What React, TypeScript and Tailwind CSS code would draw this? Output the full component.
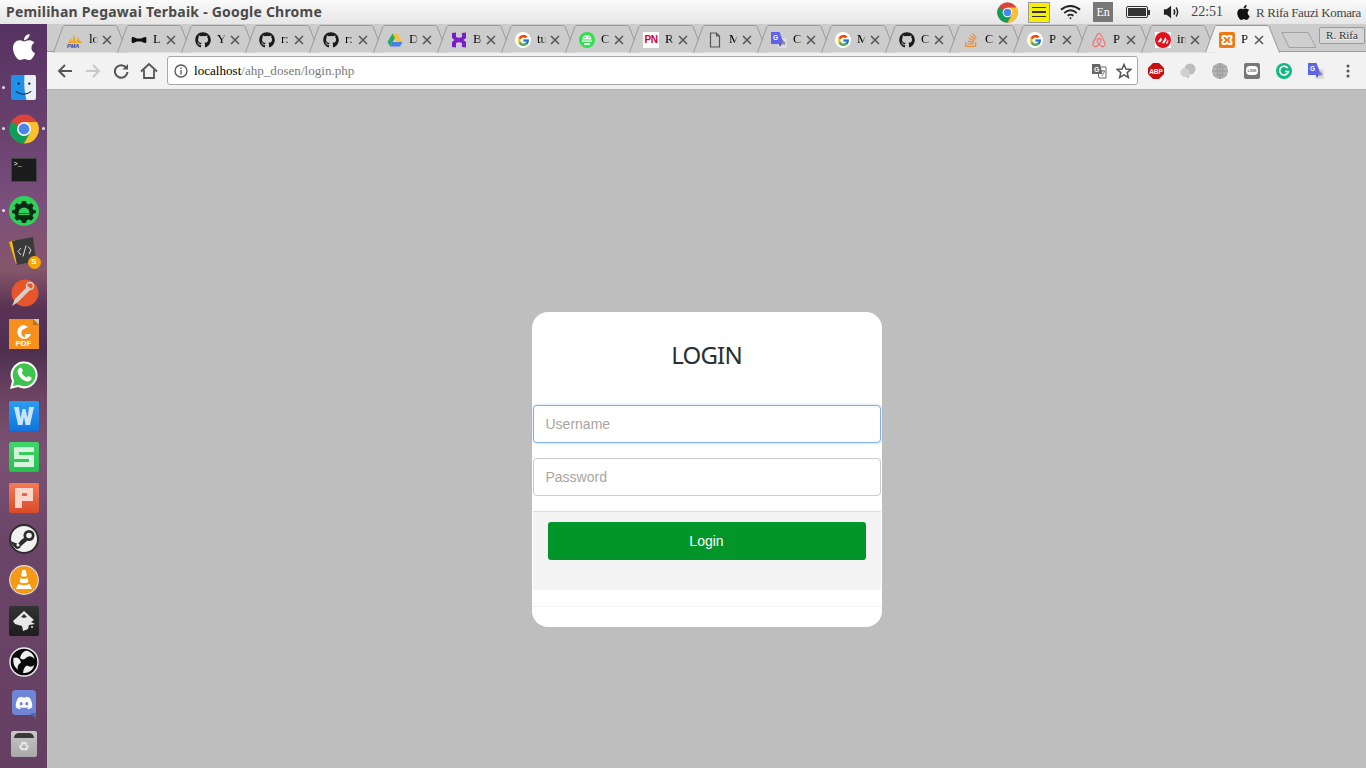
import React from "react";
import { FaGithub, FaStackOverflow, FaAirbnb, FaDiscord, FaApple } from "react-icons/fa";
import { FcGoogle } from "react-icons/fc";

const GoogleIcon = () => (
  <span className="flex h-4 w-4 items-center justify-center rounded-full bg-white">
    <FcGoogle size={13} />
  </span>
);
const Gh = () => <FaGithub size={16} color="#1b1b1b" />;

const Pma = () => (
  <svg viewBox="0 0 16 16" className="h-4 w-4">
    <path d="M1 11 L4 6 L5 11Z M5 11 L7 2 L9 11Z M9 11 L11 5 L13 11Z M12 8 L15.5 11 L13 11Z" fill="#f2a31b" />
    <text x="0" y="15.5" fontSize="5.5" fontWeight="700" fontStyle="italic" fill="#3b3b9a" fontFamily="Liberation Sans">PMA</text>
  </svg>
);
const Bow = () => (
  <svg viewBox="0 0 16 16" className="h-4 w-4">
    <path d="M1 5 C3 4.5 5 6.5 6 6.5 H10 C11 6.5 13 4.5 15 5 C15.6 7 15.6 9 15 11 C13 11.5 11 9.5 10 9.5 H6 C5 9.5 3 11.5 1 11 C0.4 9 0.4 7 1 5Z" fill="#111" />
  </svg>
);
const Drive = () => (
  <svg viewBox="0 0 16 16" className="h-4 w-4">
    <path d="M5.5 1.5 H10.5 L15.5 10 H10.5Z" fill="#fbc02d" />
    <path d="M5.5 1.5 L8 6 L3 14.5 L0.5 10Z" fill="#2aa866" />
    <path d="M3 14.5 L5.5 10 H15.5 L13 14.5Z" fill="#4a7fe8" />
  </svg>
);
const Hacker = () => (
  <svg viewBox="0 0 16 16" className="h-4 w-4">
    <path d="M1 1 L5 0.5 V5 Q8 6.5 11 5 V1 L15 0.5 V6 L12.5 8 L15 10 V15.5 L11 15 V11 Q8 9.5 5 11 V15.5 L1 15 V10 L3.5 8 L1 6Z" fill="#7a1fc8" />
  </svg>
);
const AndroidGreen = () => (
  <svg viewBox="0 0 16 16" className="h-4 w-4">
    <circle cx="8" cy="8" r="8" fill="#2fe04f" />
    <path d="M3.5 7.5 A4.5 4.5 0 0 1 12.5 7.5Z M3 8.5 H13 V10 H3Z M5 11 H11 V13 H5Z" fill="#fff" />
    <circle cx="6" cy="5.5" r="0.8" fill="#2fe04f" />
    <circle cx="10" cy="5.5" r="0.8" fill="#2fe04f" />
  </svg>
);
const Pn = () => (
  <span className="flex h-4 w-4 items-center justify-center bg-white font-['Liberation_Sans'] text-[10px] font-bold leading-none tracking-tighter text-[#d0021b]">PN</span>
);
const Doc = () => (
  <svg viewBox="0 0 16 16" className="h-4 w-4" fill="none" stroke="#555" strokeWidth="1.2">
    <path d="M3.5 1 H9.5 L12.5 4 V15 H3.5Z M9.5 1 V4 H12.5" />
  </svg>
);
const GTranslate = () => (
  <svg viewBox="0 0 16 16" className="h-4 w-4">
    <path d="M9 6 H16 V16 H7Z" fill="#dcdcdc" />
    <path d="M0 0 H8.5 L13 12 H0Z" fill="#5f63e8" />
    <path d="M8 12 H10.5 L9 15Z" fill="#4a3fb0" />
    <path d="M12.5 8 L13.3 10 L15 10.2 L13.7 11.4 L14 13.2 L12.5 12.3 L11 13.2 L11.3 11.4 L10 10.2 L11.7 10Z" fill="#8a8aa0" />
    <text x="2" y="8" fontSize="6.5" fontWeight="700" fill="#fff" fontFamily="Liberation Sans">G</text>
  </svg>
);
const So = () => <FaStackOverflow size={16} color="#e8913a" />;
const Air = () => <FaAirbnb size={16} color="#ff5a5f" />;
const Dots = () => (
  <span className="flex h-4 w-4 items-center justify-center bg-white">
    <svg viewBox="0 0 16 16" className="h-4 w-4">
      <circle cx="8" cy="8" r="8" fill="#e1101a" />
      <path d="M2.5 10 L6 5.5 L7 8 L5 10.5Z M7 11 L10.5 5 L11.5 8 L9 11.5Z M11 11 L13 7.5 L13.5 9.5 L12 12Z" fill="#fff" />
    </svg>
  </span>
);
const Xampp = () => (
  <svg viewBox="0 0 16 16" className="h-4 w-4">
    <rect width="16" height="16" rx="2" fill="#ee7a10" />
    <path d="M4 3 H7 L8 4.5 L9 3 H12 Q13.5 3 13.5 5 V6.5 L12 8 L13.5 9.5 V11 Q13.5 13 12 13 H9 L8 11.5 L7 13 H4 Q2.5 13 2.5 11 V9.5 L4 8 L2.5 6.5 V5 Q2.5 3 4 3Z M4.5 5 V6 L6.5 8 L4.5 10 V11 H6.2 L8 9 L9.8 11 H11.5 V10 L9.5 8 L11.5 6 V5 H9.8 L8 7 L6.2 5Z" fill="#fff" fillRule="evenodd" />
  </svg>
);

const tabs: { icon: React.ReactNode; t: string }[] = [
  { icon: <Pma />, t: "lo" },
  { icon: <Bow />, t: "L" },
  { icon: <Gh />, t: "Y" },
  { icon: <Gh />, t: "r:" },
  { icon: <Gh />, t: "r:" },
  { icon: <Drive />, t: "D" },
  { icon: <Hacker />, t: "B" },
  { icon: <GoogleIcon />, t: "tu" },
  { icon: <AndroidGreen />, t: "C" },
  { icon: <Pn />, t: "R" },
  { icon: <Doc />, t: "M" },
  { icon: <GTranslate />, t: "C" },
  { icon: <GoogleIcon />, t: "M" },
  { icon: <Gh />, t: "C" },
  { icon: <So />, t: "C" },
  { icon: <GoogleIcon />, t: "P" },
  { icon: <Air />, t: "P" },
  { icon: <Dots />, t: "in" },
  { icon: <Xampp />, t: "P" },
];

const Close = () => (
  <svg viewBox="0 0 10 10" className="absolute left-[49px] top-[10px] h-[10px] w-[10px]" stroke="#555" strokeWidth="1.5">
    <path d="M1 1 L9 9 M9 1 L1 9" />
  </svg>
);

const Tab = ({ icon, t, active }: { icon: React.ReactNode; t: string; active?: boolean }) => (
  <div className={`relative h-[27px] w-[64px] shrink-0 ${active ? "z-10" : ""}`}>
    <svg viewBox="0 0 76 28" className="absolute left-0 top-0 h-[28px] w-[76px]">
      <path d="M0.5 27.5 L10 1.5 Q10.5 0.5 12 0.5 H62 Q63.5 0.5 64 1.5 L74.5 27.5" fill={active ? "#f2f2f2" : "#cccccc"} stroke="#9a9a9a" strokeWidth="1" />
    </svg>
    <div className="absolute left-[14px] top-[7px] flex h-4 w-4 items-center justify-center">{icon}</div>
    <div className="absolute left-[36px] top-[4px] w-[9px] overflow-hidden whitespace-nowrap font-['Liberation_Serif'] text-[13px] leading-[20px] text-black [mask-image:linear-gradient(90deg,#000_55%,transparent)]">{t}</div>
    <Close />
  </div>
);

const ChromeLogo = ({ size }: { size: number }) => (
  <svg viewBox="0 0 32 32" style={{ width: size, height: size }}>
    <circle cx="16" cy="16" r="15.5" fill="#db4437" />
    <path d="M16 16 L2.6 8.2 A15.5 15.5 0 0 0 16 31.5 L23.7 18.2Z" fill="#0f9d58" />
    <path d="M16 8.5 H29.9 A15.5 15.5 0 0 1 16 31.5 L23 19Z" fill="#fbc02d" />
    <circle cx="16" cy="16" r="7.4" fill="#fff" />
    <circle cx="16" cy="16" r="5.8" fill="#4a86e8" />
  </svg>
);

const Finder = () => (
  <svg viewBox="0 0 26 26" className="h-[25px] w-[25px]">
    <rect width="26" height="26" rx="2" fill="#1f8fe8" />
    <path d="M14 0 H24 Q26 0 26 2 V24 Q26 26 24 26 H16 Q13 14 14 0Z" fill="#e8eef4" />
    <circle cx="8" cy="9" r="1.2" fill="#123" />
    <circle cx="19" cy="9" r="1.2" fill="#123" />
    <path d="M5 17 Q13 23 21 17" fill="none" stroke="#123" strokeWidth="1.2" />
  </svg>
);
const Terminal = () => (
  <div className="flex h-[24px] w-[26px] items-start rounded-[1px] border border-[#444] bg-[#1c1c1c] pl-[2px] pt-[1px] font-['Liberation_Mono'] text-[7px] leading-[8px] text-white">&gt;_</div>
);
const AndroidGear = () => (
  <svg viewBox="0 0 30 30" className="h-[30px] w-[30px]">
    <circle cx="15" cy="15" r="15" fill="#2fd158" />
    <path d="M13 5 H17 L17.6 7.4 L20 8.4 L22 7 L24.8 9.8 L23.4 11.8 L24.4 14 L27 14.6 V17 L24.4 17.8 L23.4 20 L24.8 22 L22 24.8 L20 23.4 L17.6 24.4 L17 27 H13 L12.4 24.4 L10 23.4 L8 24.8 L5.2 22 L6.6 20 L5.6 17.8 L3 17 V14.6 L5.6 14 L6.6 11.8 L5.2 9.8 L8 7 L10 8.4 L12.4 7.4Z" fill="#0d2a14" />
    <path d="M9.5 17 A5.5 5.5 0 0 1 20.5 17Z" fill="#2fd158" />
    <rect x="9.5" y="17.6" width="11" height="1.4" fill="#2fd158" />
  </svg>
);
const Sublime = () => (
  <div className="relative h-[30px] w-[30px]">
    <svg viewBox="0 0 30 30" className="h-[30px] w-[30px]">
      <path d="M0 5 L6 3 L11 26 L7 27Z" fill="#f5b915" />
      <path d="M3 4 L24 0 L27 24 L8 28Z" fill="#3a3a3a" />
      <path d="M12 11 L9 14.5 L12 18 M19 9.5 L22 13 L20 17 M17 8.5 L14 19.5" fill="none" stroke="#ddd" strokeWidth="1" />
    </svg>
    <span className="absolute bottom-[-2px] right-[-2px] flex h-[13px] w-[13px] items-center justify-center rounded-full bg-[#f5a50a] font-['Liberation_Sans'] text-[8px] font-bold leading-none text-white">S</span>
  </div>
);
const PenApp = () => (
  <svg viewBox="0 0 30 30" className="h-[30px] w-[30px]">
    <circle cx="16" cy="15" r="13.5" fill="#e5562a" />
    <path d="M3 28 L6 21 L19 8 L22 11 L9 24Z" fill="#d6d0cc" />
    <circle cx="21" cy="8" r="3.5" fill="none" stroke="#d6d0cc" strokeWidth="1.6" />
  </svg>
);
const Foxit = () => (
  <div className="relative flex h-[30px] w-[30px] flex-col items-center justify-end overflow-hidden bg-[#f5901e]">
    <svg viewBox="0 0 30 30" className="absolute left-0 top-0 h-[30px] w-[30px]">
      <path d="M24 0 H30 V6Z" fill="#c8c8c8" />
      <path d="M24 0 L30 6 H24Z" fill="#c0701a" />
      <path d="M15 6 A7 7 0 1 0 22 15 H16 V18 H18 A4 4 0 1 1 15 10 L19 8Z" fill="#fff" />
    </svg>
    <span className="relative font-['Liberation_Sans'] text-[8px] font-bold leading-[11px] text-white">PDF</span>
  </div>
);
const WhatsApp = () => (
  <svg viewBox="0 0 30 30" className="h-[30px] w-[30px]">
    <path d="M1 29 L3 21 A13.5 13.5 0 1 1 9 27Z" fill="#fff" />
    <path d="M4 26 L5.2 20.6 A11.5 11.5 0 1 1 9.4 24.8Z" fill="#3fc34f" />
    <path d="M10.5 8 L12.6 7.6 L14 11 L12.6 12.8 Q14.4 16 17.6 17.6 L19.4 16 L22.6 17.6 L22.2 19.8 Q20 22.4 16 20.8 Q10.6 18.4 8.8 13 Q8 10 10.5 8Z" fill="#fff" />
  </svg>
);
const Wps = ({ cls, children }: { cls: string; children: React.ReactNode }) => (
  <div className={`h-[30px] w-[30px] rounded-[2px] bg-gradient-to-b ${cls}`}>
    <svg viewBox="0 0 30 30" className="h-[30px] w-[30px]">{children}</svg>
  </div>
);
const Steam = () => (
  <svg viewBox="0 0 30 30" className="h-[30px] w-[30px]">
    <circle cx="15" cy="15" r="14" fill="#f1f1f1" stroke="#2d2d2d" strokeWidth="2" />
    <path d="M1.5 17 L9 20 L12 16 L18 12 L18 17 L12 22 Q11 25 8 25 Q4 23 1.5 17Z" fill="#2d2d2d" />
    <circle cx="20" cy="11.5" r="5.5" fill="#2d2d2d" />
    <circle cx="20" cy="11.5" r="2.8" fill="#f1f1f1" />
    <circle cx="9" cy="21" r="1.6" fill="#f1f1f1" />
  </svg>
);
const Vlc = () => (
  <svg viewBox="0 0 30 30" className="h-[30px] w-[30px]">
    <circle cx="15" cy="15" r="14.3" fill="#f59a12" stroke="#dcdcdc" strokeWidth="1.2" />
    <path d="M15 5 L16.6 5 L18 11 Q15 12.5 12 11 L13.4 5Z M11.5 13 Q15 15 18.5 13 L19.5 17 Q15 19.5 10.5 17Z" fill="#fff" />
    <path d="M9.5 19 Q15 21.5 20.5 19 L23 24 H7Z" fill="#fff" />
  </svg>
);
const Inkscape = () => (
  <div className="flex h-[30px] w-[30px] items-center justify-center rounded-[2px] bg-gradient-to-b from-[#333] to-[#1e1e1e]">
    <svg viewBox="0 0 30 30" className="h-[30px] w-[30px]">
      <path d="M15 5 L25 14 L22 16 L26 18 L20 19 L19 23 L14 25 L13 20 L6 18 L4 15Z" fill="#e8e8e8" />
      <path d="M15 8 L18 11 L15 12 L12 11Z" fill="#333" />
      <circle cx="23" cy="21" r="1" fill="#e8e8e8" />
    </svg>
  </div>
);
const Obs = () => (
  <svg viewBox="0 0 30 30" className="h-[30px] w-[30px]">
    <circle cx="15" cy="15" r="14" fill="#0a0a0a" stroke="#f0f0f0" strokeWidth="1.4" />
    <path d="M17 3.5 Q24 4.5 25.5 12 Q22 7.5 17.5 10.5 Q14 14 11 11 Q12 5.5 17 3.5Z" fill="#f0f0f0" />
    <path d="M4.5 11 Q3 18 9 23 Q7.5 18 12 15.5 Q11 11 7 10.5Z" fill="#f0f0f0" />
    <path d="M14 26 Q22 27 25.5 18 Q22 21 18 18.5 Q14.5 20 14 26Z" fill="#f0f0f0" />
  </svg>
);
const DiscordIcon = () => (
  <div className="relative flex h-[25px] w-[24px] items-center justify-center rounded-[4px] bg-[#6f86d6]">
    <FaDiscord size={18} color="#fff" />
    <svg viewBox="0 0 6 6" className="absolute bottom-[-4px] right-0 h-[6px] w-[6px]"><path d="M0 0 H6 V6Z" fill="#4f66b8" /></svg>
  </div>
);
const Trash = () => (
  <div className="flex h-[26px] w-[26px] flex-col items-center rounded-[2px] bg-gradient-to-b from-[#c8c8c8] to-[#a8a8a8] pt-[2px]">
    <span className="h-[5px] w-[20px] rounded-t-[6px] bg-[#3a3a3a]" />
    <span className="mt-[1px] font-['DejaVu_Sans'] text-[13px] leading-[15px] text-[#eeeeee]">♻</span>
  </div>
);

const dock: { icon: React.ReactNode; l?: boolean; r?: boolean }[] = [
  { icon: <FaApple size={30} color="#fff" /> },
  { icon: <Finder />, l: true },
  { icon: <ChromeLogo size={30} />, l: true, r: true },
  { icon: <Terminal /> },
  { icon: <AndroidGear />, l: true },
  { icon: <Sublime /> },
  { icon: <PenApp /> },
  { icon: <Foxit /> },
  { icon: <WhatsApp /> },
  { icon: <Wps cls="from-[#2b9df0] to-[#1273e0]"><path d="M5 6 H10 L11.5 17 L13.5 8 H16.5 L18.5 17 L20 6 H25 L21 24 H16.5 L15 16 L13.5 24 H9Z" fill="#c9e4fb" /></Wps> },
  { icon: <Wps cls="from-[#3fd668] to-[#25c04e]"><path d="M5 5 H25 V10 H10 V13 H25 V25 H5 V20 H20 V17 H5Z" fill="#d4f4dc" /></Wps> },
  { icon: <Wps cls="from-[#f47a55] to-[#d94a26]"><path d="M6 5 H24 V18 H13 V25 H6Z M13 10 V13 H18 V10Z" fill="#fbd7cb" fillRule="evenodd" /></Wps> },
  { icon: <Steam /> },
  { icon: <Vlc /> },
  { icon: <Inkscape /> },
  { icon: <Obs /> },
  { icon: <DiscordIcon /> },
  { icon: <Trash /> },
];

export default function App() {
  return (
    <div className="flex h-[768px] w-[1366px] flex-col overflow-hidden bg-[#bebebe] font-['Liberation_Sans',sans-serif]">
      {/* system bar */}
      <div className="flex h-[24px] shrink-0 items-center justify-between bg-gradient-to-b from-[#fafafa] to-[#e6e6e6] pl-[6px] pr-[5px]">
        <span className="font-['Noto_Sans',sans-serif] text-[14px] font-bold leading-none tracking-[0.22px] text-[#4a4a4a]">Pemilihan Pegawai Terbaik - Google Chrome</span>
        <div className="flex items-center">
          <ChromeLogo size={21} />
          <div className="ml-[10px] flex h-[21px] w-[22px] flex-col items-center justify-center gap-[3px] border border-[#999] bg-[#f5f000]">
            <span className="h-[1.5px] w-[14px] bg-[#333]" />
            <span className="h-[1.5px] w-[14px] bg-[#333]" />
            <span className="h-[1.5px] w-[14px] bg-[#333]" />
          </div>
          <svg viewBox="0 0 22 16" className="ml-[10px] h-[16px] w-[21px]" fill="none" stroke="#222" strokeWidth="2">
            <path d="M1 5.5 Q11 -2 21 5.5 M4.5 9 Q11 3.5 17.5 9 M8 12 Q11 9.5 14 12" />
            <circle cx="11" cy="14.5" r="1" fill="#222" stroke="none" />
          </svg>
          <span className="ml-[12px] flex h-[20px] w-[20px] items-center justify-center bg-[#777] font-['Liberation_Serif'] text-[12px] text-white">En</span>
          <div className="ml-[13px] flex items-center">
            <div className="h-[12px] w-[22px] rounded-[2px] border border-[#333] p-[1px]"><div className="h-full w-full bg-[#333]" /></div>
            <span className="h-[5px] w-[2px] bg-[#333]" />
          </div>
          <svg viewBox="0 0 20 16" className="ml-[13px] h-[16px] w-[18px]" fill="none" stroke="#222" strokeWidth="1.6">
            <path d="M1 5 H4 L9 1 V15 L4 11 H1Z" fill="#222" stroke="none" />
            <path d="M12 5 Q14 8 12 11 M14.5 3 Q18 8 14.5 13" />
          </svg>
          <span className="ml-[10px] font-['Liberation_Serif'] text-[14px] leading-none text-[#444]">22:51</span>
          <FaApple size={17} color="#111" className="ml-[12px]" />
          <span className="ml-[4px] font-['Liberation_Serif'] text-[13px] leading-none tracking-[-0.35px] text-[#444]">R Rifa Fauzi Komara</span>
        </div>
      </div>
      <div className="flex min-h-0 flex-1">
        {/* dock */}
        <div className="relative w-[47px] shrink-0 bg-[linear-gradient(180deg,#563260_0%,#6a4270_15%,#7b4f7c_24%,#85566a_33%,#5a3355_38%,#4e2f4f_44%,#6c4463_50%,#7a5273_58%,#6a4568_70%,#643f62_100%)] pt-[2px]">
          {dock.map((d, i) => (
            <div key={i} className="relative flex h-[41px] items-center justify-center">
              {d.l && <span className="absolute left-[2px] h-[3px] w-[3px] rounded-full bg-[#e8e0e8]" />}
              {d.r && <span className="absolute right-[2px] h-[3px] w-[3px] rounded-full bg-[#e8e0e8]" />}
              {d.icon}
            </div>
          ))}
        </div>
        <div className="flex min-w-0 flex-1 flex-col">
          {/* tab strip */}
          <div className="relative flex h-[28px] shrink-0 items-start border-b border-[#9a9a9a] bg-[#cccccc] pl-[6px] pt-[1px]">
            {tabs.map((t, i) => (
              <Tab key={i} icon={t.icon} t={t.t} active={i === 18} />
            ))}
            <svg viewBox="0 0 36 18" className="ml-[12px] mt-[6px] h-[18px] w-[36px] shrink-0">
              <path d="M1 1.5 H27 L35 16.5 H8Z" fill="#cfcfcf" stroke="#a2a2a2" strokeWidth="1" />
            </svg>
            <span className="absolute right-[1px] top-[3px] flex h-[17px] w-[46px] items-center justify-center rounded-[2px] border border-[#9a9a9a] bg-[#d6d6d6] font-['Liberation_Serif'] text-[11px] leading-none text-[#333] [text-shadow:0_1px_0_#fff]">R. Rifa</span>
          </div>
          {/* toolbar */}
          <div className="flex h-[38px] shrink-0 items-center border-b border-[#b0b0b0] bg-[#f2f2f2]">
            <svg viewBox="0 0 16 16" className="ml-[10px] h-4 w-4" fill="none" stroke="#555" strokeWidth="2"><path d="M15 8 H2 M8 2 L2 8 L8 14" /></svg>
            <svg viewBox="0 0 16 16" className="ml-[12px] h-4 w-4" fill="none" stroke="#c8c8c8" strokeWidth="2"><path d="M1 8 H14 M8 2 L14 8 L8 14" /></svg>
            <svg viewBox="0 0 16 16" className="ml-[12px] h-4 w-4" fill="none" stroke="#555" strokeWidth="2"><path d="M13.5 5 A6.3 6.3 0 1 0 14.5 9" /><path d="M15 1 V6.5 H9.5Z" fill="#555" stroke="none" /></svg>
            <svg viewBox="0 0 18 18" className="ml-[11px] h-[18px] w-[18px]" fill="none" stroke="#555" strokeWidth="1.8"><path d="M1 9.5 L9 2 L17 9.5 M4 8 V16 H14 V8" /></svg>
            <div className="ml-[9px] flex h-[29px] w-[971px] items-center rounded-[3px] border border-[#a8a8a8] bg-white">
              <svg viewBox="0 0 14 14" className="ml-[6px] h-[14px] w-[14px]" fill="none" stroke="#555" strokeWidth="1.3">
                <circle cx="7" cy="7" r="6" />
                <path d="M7 6 V10.5 M7 3.5 V5" />
              </svg>
              <span className="ml-[6px] font-['Liberation_Serif'] text-[13.1px] leading-none text-black">localhost<span className="text-[#7a7a7a]">/ahp_dosen/login.php</span></span>
              <svg viewBox="0 0 16 16" className="ml-auto h-4 w-4">
                <path d="M6 4 H15 V15 H8Z" fill="#fff" stroke="#666" strokeWidth="1" />
                <path d="M1 1 H9 L11.5 11 H1Z" fill="#666" />
                <text x="3" y="8.5" fontSize="7" fontWeight="700" fill="#fff" fontFamily="Liberation Sans">G</text>
                <path d="M10 8 H14 M12 7 V8 M10.5 13 Q13 11 13.5 8" fill="none" stroke="#666" strokeWidth="0.9" />
              </svg>
              <svg viewBox="0 0 16 16" className="ml-[9px] mr-[5px] h-4 w-4" fill="none" stroke="#555" strokeWidth="1.5">
                <path d="M8 1.5 L10 6 L15 6.4 L11.2 9.6 L12.4 14.5 L8 11.9 L3.6 14.5 L4.8 9.6 L1 6.4 L6 6Z" />
              </svg>
            </div>
            <svg viewBox="0 0 16 16" className="ml-[10px] h-4 w-4">
              <path d="M5 0 H11 L16 5 V11 L11 16 H5 L0 11 V5Z" fill="#c80f0f" />
              <text x="8" y="10.5" fontSize="6.5" fontWeight="700" textAnchor="middle" fill="#fff" fontFamily="Liberation Sans">ABP</text>
            </svg>
            <svg viewBox="0 0 16 16" className="ml-[16px] h-4 w-4">
              <circle cx="10" cy="6" r="5.5" fill="#bdbdbd" />
              <circle cx="5" cy="9.5" r="4.5" fill="#cfcfcf" />
              <path d="M6 13 L8 16 L10 12Z" fill="#c6c6c6" />
            </svg>
            <svg viewBox="0 0 16 16" className="ml-[16px] h-4 w-4" fill="none" stroke="#a8a8a8" strokeWidth="1">
              <circle cx="8" cy="8" r="8" fill="#b4b4b4" stroke="none" />
              <path d="M0 8 H16 M1 4 H15 M1 12 H15 M8 0 V16 M8 0 Q2 8 8 16 M8 0 Q14 8 8 16" stroke="#9c9c9c" />
            </svg>
            <div className="relative ml-[16px] flex h-4 w-4 items-center justify-center rounded-[2px] bg-[#777]">
              <span className="flex h-[9px] w-[12px] items-center justify-center rounded-[4px] bg-white font-['Liberation_Sans'] text-[4px] font-bold leading-none text-[#777]">LINE</span>
            </div>
            <svg viewBox="0 0 16 16" className="ml-[16px] h-4 w-4" fill="none">
              <circle cx="8" cy="8" r="8" fill="#11b981" />
              <path d="M11.6 5 A4.4 4.4 0 1 0 12.4 8.5 H9" stroke="#fff" strokeWidth="1.6" />
            </svg>
            <span className="ml-[16px] flex"><GTranslate /></span>
            <svg viewBox="0 0 4 16" className="ml-[22px] h-4 w-[4px]" fill="#555">
              <circle cx="2" cy="3" r="1.5" />
              <circle cx="2" cy="8" r="1.5" />
              <circle cx="2" cy="13" r="1.5" />
            </svg>
          </div>
          {/* page */}
          <main className="flex flex-1 justify-center pt-[222px]">
            <div className="flex h-[315px] w-[350px] flex-col rounded-[16px] bg-white">
              <h1 className="flex h-[93px] items-start justify-center pt-[31px] font-['Noto_Sans',sans-serif] text-[24px] font-normal leading-[24px] tracking-[-0.8px] text-[#2b2f33]">LOGIN</h1>
              <div className="flex flex-col gap-[15px] px-[1px]">
                <input readOnly placeholder="Username" className="h-[38px] w-full rounded-[4px] border border-[#80aef0] bg-white px-3 text-[14px] text-[#333] shadow-[0_0_3px_rgba(102,155,240,0.45)] outline-none placeholder:text-[#aaa59f]" />
                <input readOnly placeholder="Password" className="h-[38px] w-full rounded-[4px] border border-[#cccccc] bg-white px-3 text-[14px] text-[#333] outline-none placeholder:text-[#aaa59f]" />
              </div>
              <div className="mx-[1px] mt-[15px] h-[79px] rounded-b-[2px] border-t border-[#dddddd] bg-[#f4f4f4] px-[15px] pt-[10px]">
                <button className="h-[38px] w-full rounded-[3px] bg-[#02962a] text-[14px] text-white">Login</button>
              </div>
              <div className="mt-[16px] border-t border-[#f2f2f2]" />
            </div>
          </main>
        </div>
      </div>
    </div>
  );
}
